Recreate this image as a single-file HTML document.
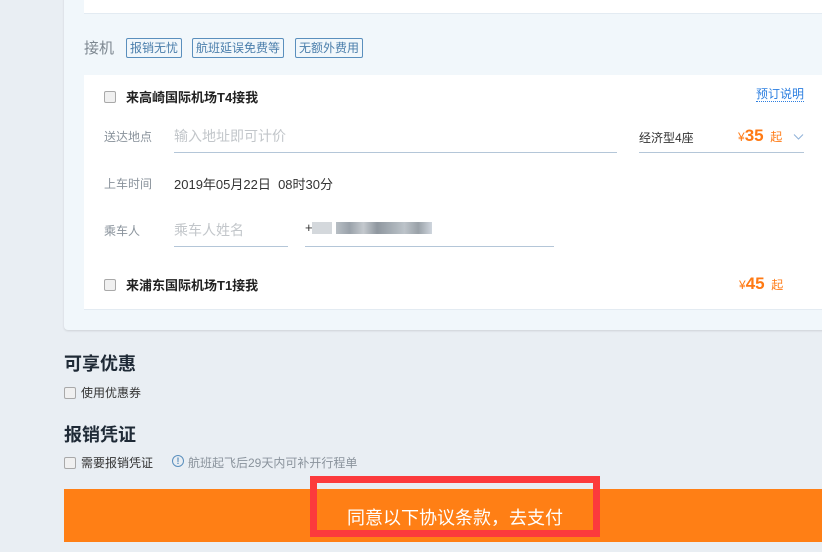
<!DOCTYPE html>
<html><head><meta charset="utf-8"><style>
*{margin:0;padding:0;box-sizing:border-box}
body{width:822px;height:552px;background:#e9eef3;font-family:"Liberation Sans","Noto Sans CJK SC",sans-serif;position:relative;overflow:hidden;color:#333}
.abs{position:absolute;white-space:nowrap}
.card{position:absolute;left:64px;top:-10px;width:770px;height:340px;background:#f1f7fb;border-radius:4px;box-shadow:0 1px 2px rgba(0,0,0,.12)}
.w1{position:absolute;left:84px;top:-10px;width:750px;height:24px;background:#fff;border-bottom:1px solid #e3ebf2}
.w2{position:absolute;left:84px;top:75px;width:750px;height:235px;background:#fff;border-bottom:1px solid #e3ebf2}
.tag{position:absolute;top:38px;height:20px;border:1px solid #5a8fbd;border-radius:2px;font-size:12px;color:#4a7eab;line-height:18px;padding:0 3px}
.cb{position:absolute;width:12px;height:12px;border:1px solid #a9a9a9;border-radius:2px;background:#f0f0f0}
.lbl{font-size:12px;color:#8a939c}
.line{position:absolute;height:1px;background:#b4c6d8}
.org{color:#ff7a14}
</style></head><body>
<div class="card"></div>
<div class="w1"></div>
<div class="abs" style="left:84px;top:37px;font-size:15px;color:#7d8790">接机</div>
<div class="tag" style="left:126px">报销无忧</div>
<div class="tag" style="left:192px">航班延误免费等</div>
<div class="tag" style="left:295px">无额外费用</div>
<div class="w2"></div>
<div class="cb" style="left:104px;top:91px"></div>
<div class="abs" style="left:126px;top:87px;font-size:13px;font-weight:bold;color:#222">来高崎国际机场T4接我</div>
<div class="abs" style="left:756px;top:87px;font-size:12px;color:#2d7fe0;border-bottom:1px dotted #2d7fe0;line-height:14px">预订说明</div>
<div class="abs lbl" style="left:104px;top:128px">送达地点</div>
<div class="abs" style="left:174px;top:126px;font-size:14px;color:#c2c6ca">输入地址即可计价</div>
<div class="line" style="left:174px;top:152px;width:443px"></div>
<div class="abs" style="left:639px;top:129px;font-size:12px;color:#333">经济型4座</div>
<div class="abs org" style="left:738px;top:126px;font-size:12px">¥<b style="font-size:17px">35</b>&nbsp; 起</div>
<svg class="abs" style="left:793px;top:133px" width="11" height="8"><path d="M1 1.5L5.5 6L10 1.5" fill="none" stroke="#8fb2d8" stroke-width="1"/></svg>
<div class="line" style="left:639px;top:152px;width:165px"></div>
<div class="abs lbl" style="left:104px;top:175px">上车时间</div>
<div class="abs" style="left:174px;top:174px;font-size:13px;color:#333">2019年05月22日&nbsp; 08时30分</div>
<div class="abs lbl" style="left:104px;top:222px">乘车人</div>
<div class="abs" style="left:174px;top:220px;font-size:14px;color:#c2c6ca">乘车人姓名</div>
<div class="line" style="left:174px;top:246px;width:114px"></div>
<div class="abs" style="left:305px;top:220px;font-size:13px;color:#333">+</div>
<div class="abs" style="left:312px;top:222px;width:20px;height:12px;background:#d4d8dc"></div>
<div class="abs" style="left:336px;top:222px;width:96px;height:12px;background:linear-gradient(90deg,#b7bec4,#9aa2aa,#c4c9ce,#8f979f,#a5adb4,#bcc3c9,#9aa1a8,#cfd6de)"></div>
<div class="line" style="left:305px;top:246px;width:249px"></div>
<div class="cb" style="left:104px;top:279px"></div>
<div class="abs" style="left:126px;top:275px;font-size:13px;font-weight:bold;color:#222">来浦东国际机场T1接我</div>
<div class="abs org" style="left:739px;top:274px;font-size:12px">¥<b style="font-size:17px">45</b>&nbsp; 起</div>
<div class="abs" style="left:64px;top:350px;font-size:18px;font-weight:bold;color:#1f2a36">可享优惠</div>
<div class="cb" style="left:64px;top:387px"></div>
<div class="abs" style="left:81px;top:384px;font-size:12px;color:#333">使用优惠券</div>
<div class="abs" style="left:64px;top:421px;font-size:18px;font-weight:bold;color:#1f2a36">报销凭证</div>
<div class="cb" style="left:64px;top:457px"></div>
<div class="abs" style="left:81px;top:454px;font-size:12px;color:#333">需要报销凭证</div>
<div class="abs" style="left:172px;top:455px;width:12px;height:12px;border:1px solid #5a8fbd;border-radius:50%;font-size:9px;line-height:10px;text-align:center;color:#5a8fbd;font-weight:bold">!</div>
<div class="abs" style="left:188px;top:454px;font-size:12px;color:#8a939c">航班起飞后29天内可补开行程单</div>
<div class="abs" style="left:64px;top:489px;width:760px;height:53px;background:#ff7f15"></div>
<div class="abs" style="left:310px;top:476px;width:290px;height:61px;border:7px solid #fc3a3c"></div>
<div class="abs" style="left:310px;top:504px;width:290px;text-align:center;font-size:18px;color:#fff">同意以下协议条款，去支付</div>
</body></html>
